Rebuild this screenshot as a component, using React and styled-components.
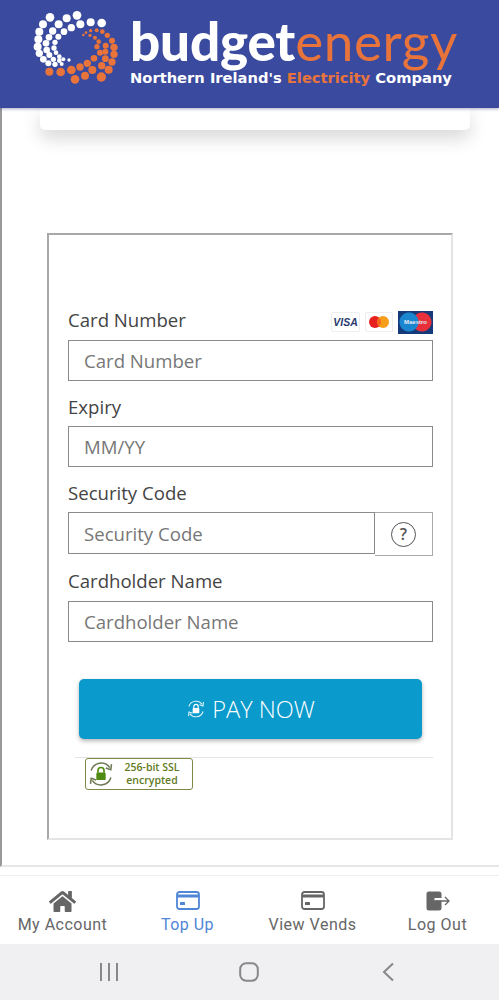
import React from 'react'
import styled, { createGlobalStyle } from 'styled-components'
import { FaHome } from 'react-icons/fa'

const whiteDots = [
    [150, 52, 13], [200, 55, 12], [231, 46, 13], [272, 67, 12], [305, 69, 13],
    [129, 73, 12], [176, 73, 12], [214, 83, 11], [241, 73, 12],
    [118, 95, 12], [158, 93, 11], [192, 95, 10],
    [115, 118, 12], [147, 112, 10], [175, 110, 9],
    [113, 140, 12], [138, 130, 10], [165, 127, 8],
    [118, 160, 11], [140, 150, 10], [162, 144, 8],
    [130, 178, 10], [148, 165, 9], [168, 158, 7],
    [145, 190, 9], [160, 178, 8], [178, 170, 7],
    [165, 193, 8], [178, 182, 7], [190, 178, 6], [207, 180, 5], [185, 192, 6],
]

const orangeDots = [
    [148, 215, 12], [182, 216, 13], [214, 210, 13], [240, 201, 11], [262, 190, 11], [282, 175, 10], [300, 158, 9],
    [225, 238, 13], [255, 227, 12], [277, 210, 12], [305, 197, 11], [316, 176, 10],
    [304, 231, 14], [326, 209, 12], [336, 186, 11], [342, 163, 11], [342, 142, 11], [336, 122, 9], [322, 106, 8], [307, 95, 7], [290, 91, 6], [272, 92, 5],
    [317, 137, 9], [316, 155, 9], [291, 140, 8], [296, 125, 7], [285, 113, 6], [270, 106, 5], [250, 105, 4], [258, 98, 4],
]

const LogoMark = () => (
    <LogoSvg viewBox="90 24 270 240">
        {whiteDots.map(([x, y, r]) => <circle key={`${x}-${y}`} cx={x} cy={y} r={r} fill="#fff" />)}
        {orangeDots.map(([x, y, r]) => <circle key={`${x}-${y}`} cx={x} cy={y} r={r} fill="#e8743b" />)}
    </LogoSvg>
)

const CardOutline = ({ color }) => (
    <svg width="24" height="20" viewBox="0 0 24 20" fill="none">
        <rect x="1" y="1" width="22" height="17" rx="2.5" stroke={color} strokeWidth="1.8" />
        <rect x="1" y="3.5" width="22" height="3" fill={color} />
        <rect x="4" y="11" width="5" height="3" rx="0.5" fill={color} />
    </svg>
)

const LogoutIcon = () => (
    <svg width="24" height="20" viewBox="0 0 24 20" fill="none">
        <path d="M3 0.5h10a2.5 2.5 0 0 1 2.5 2.5v4H8.5v2.5h7V17a2.5 2.5 0 0 1-2.5 2.5H3A2.5 2.5 0 0 1 .5 17V3A2.5 2.5 0 0 1 3 .5z" fill="#666" />
        <path d="M9 10h14M19 6l4 4-4 4" stroke="#666" strokeWidth="1.3" />
    </svg>
)

const LockCycle = ({ color, size, lock }) => (
    <svg width={size} height={size} viewBox="0 0 24 24" fill="none">
        <path d="M3.5 9A9 9 0 0 1 19.5 6.5M20.5 15A9 9 0 0 1 4.5 17.5" stroke={color} strokeWidth="1.3" />
        <path d="M21 3.5l-.6 4.8-4.3-1.4M3 20.5l.6-4.8 4.3 1.4" stroke={color} strokeWidth="1.3" />
        <path d="M9.4 11V9a2.6 2.6 0 0 1 5.2 0v2" stroke={lock || color} strokeWidth="1.4" />
        <rect x="8" y="10.8" width="8" height="6.4" rx="1" fill={lock || color} />
    </svg>
)

const Field = ({ label, children }) => (
    <FieldWrap>
        <Label>{label}</Label>
        {children}
    </FieldWrap>
)

export default function App() {
    return (
        <Screen>
            <GlobalStyle />
            <Header>
                <LogoMark />
                <LogoText>
                    <Wordmark>budget<Energy>energy</Energy></Wordmark>
                    <Tagline>Northern Ireland's <Orange>Electricity</Orange> Company</Tagline>
                </LogoText>
            </Header>
            <Main>
                <TopCard />
                <Frame>
                    <LabelRow>
                        <Label>Card Number</Label>
                        <CardLogos>
                            <VisaBadge>VISA</VisaBadge>
                            <McBadge>
                                <svg width="24" height="14" viewBox="0 0 24 14">
                                    <circle cx="8" cy="7" r="6" fill="#e8201f" />
                                    <circle cx="16" cy="7" r="6" fill="#f79e1b" />
                                    <path d="M12 2.6a6 6 0 0 1 0 8.8a6 6 0 0 1 0-8.8z" fill="#f4661e" />
                                </svg>
                            </McBadge>
                            <MaestroBadge>
                                <MaestroText>Maestro</MaestroText>
                            </MaestroBadge>
                        </CardLogos>
                    </LabelRow>
                    <Input placeholder="Card Number" />
                    <Field label="Expiry">
                        <Input placeholder="MM/YY" />
                    </Field>
                    <Field label="Security Code">
                        <SecurityRow>
                            <Input placeholder="Security Code" />
                            <HelpBox><HelpCircle>?</HelpCircle></HelpBox>
                        </SecurityRow>
                    </Field>
                    <NameField>
                        <Label>Cardholder Name</Label>
                        <Input placeholder="Cardholder Name" />
                    </NameField>
                    <PayButton>
                        <LockCycle color="#d8f0f8" lock="#fff" size={20} />
                        PAY NOW
                    </PayButton>
                    <Divider />
                    <SslBadge>
                        <LockCycle color="#6d7a55" lock="#4f8a12" size={28} />
                        <SslText>256-bit SSL<br />encrypted</SslText>
                    </SslBadge>
                </Frame>
            </Main>
            <BottomNav>
                <NavItem>
                    <NavIcon><FaHome size={27} color="#666" /></NavIcon>
                    My Account
                </NavItem>
                <NavItem $active>
                    <NavIcon><CardOutline color="#4f86d6" /></NavIcon>
                    Top Up
                </NavItem>
                <NavItem>
                    <NavIcon><CardOutline color="#666" /></NavIcon>
                    View Vends
                </NavItem>
                <NavItem>
                    <NavIcon><LogoutIcon /></NavIcon>
                    Log Out
                </NavItem>
            </BottomNav>
            <SystemBar>
                <svg width="20" height="18" viewBox="0 0 20 18">
                    <path d="M2 0v18M10 0v18M18 0v18" stroke="#888" strokeWidth="2" />
                </svg>
                <svg width="20" height="20" viewBox="0 0 20 20" fill="none">
                    <rect x="1.2" y="1.2" width="17.6" height="17.6" rx="6" stroke="#888" strokeWidth="2" />
                </svg>
                <svg width="20" height="20" viewBox="0 0 20 20" fill="none">
                    <path d="M14 1.5L5 10l9 8.5" stroke="#888" strokeWidth="2" />
                </svg>
            </SystemBar>
        </Screen>
    )
}

const GlobalStyle = createGlobalStyle`
    html, body {
        margin: 0;
        padding: 0;
        background: #fff;
    }
    * {
        box-sizing: border-box;
    }
`
const Screen = styled.div`
    width: 499px;
    height: 1000px;
    display: flex;
    flex-direction: column;
    overflow: hidden;
    background: #fff;
`
const Header = styled.header`
    height: 108px;
    flex: none;
    display: flex;
    align-items: flex-start;
    padding: 8px 0 0 30px;
    background: #3a4a9e;
    box-shadow: 0 1px 3px rgba(40, 50, 120, 0.4);
    position: relative;
    z-index: 2;
`
const LogoSvg = styled.svg`
    width: 90px;
    height: 80px;
    flex: none;
`
const LogoText = styled.div`
    margin-left: 10px;
    padding-top: 4px;
    display: flex;
    flex-direction: column;
`
const Wordmark = styled.div`
    font-family: "Lato", sans-serif;
    font-size: 53px;
    line-height: 58px;
    font-weight: 900;
    color: #fff;
    letter-spacing: -0.2px;
    white-space: nowrap;
`
const Energy = styled.span`
    font-weight: 400;
    color: #e8743b;
    letter-spacing: 0.6px;
`
const Tagline = styled.div`
    font-family: "DejaVu Sans", sans-serif;
    font-size: 14.7px;
    line-height: 16px;
    font-weight: 700;
    color: #fff;
    white-space: nowrap;
`
const Orange = styled.span`
    color: #e8743b;
`
const Main = styled.main`
    flex: none;
    height: 759px;
    border-left: 2px solid #999;
    border-bottom: 2px solid #e6e6e6;
    overflow: hidden;
`
const TopCard = styled.div`
    width: 430px;
    height: 22px;
    margin-left: 38px;
    background: #fff;
    border-radius: 0 0 5px 5px;
    box-shadow: 0 8px 18px rgba(0, 0, 0, 0.16);
`
const Frame = styled.div`
    width: 406px;
    height: 607px;
    margin: 103px 0 0 45px;
    padding: 75px 18px 0 19px;
    border: 2px solid #a8a8a8;
    border-right-color: #e4e4e4;
    border-bottom-color: #e4e4e4;
    font-family: "Open Sans", sans-serif;
`
const Label = styled.label`
    display: block;
    font-size: 18.6px;
    line-height: 24px;
    color: #444;
`
const LabelRow = styled.div`
    display: flex;
    justify-content: space-between;
    align-items: flex-start;
    height: 30px;
    ${Label} {
        line-height: 20px;
    }
`
const CardLogos = styled.div`
    display: flex;
    gap: 5px;
    align-items: center;
    height: 24px;
`
const VisaBadge = styled.div`
    width: 29px;
    height: 20px;
    border: 1px solid #eee;
    border-radius: 2px;
    font: italic 700 10.5px "Liberation Sans", sans-serif;
    color: #2a3a6e;
    display: flex;
    align-items: center;
    justify-content: center;
`
const McBadge = styled(VisaBadge)`
    width: 28px;
`
const MaestroBadge = styled.div`
    width: 35px;
    height: 23px;
    background: radial-gradient(circle at 11px 11px, #1a86d0 9px, transparent 10px),
        radial-gradient(circle at 24px 11px, #e8303a 9px, transparent 10px), #143a7a;
    display: flex;
    align-items: center;
    justify-content: center;
`
const MaestroText = styled.span`
    font: 700 6px "Liberation Sans", sans-serif;
    color: #e6ecf8;
`
const Input = styled.input`
    display: block;
    width: 100%;
    height: 41px;
    flex: 1;
    min-width: 0;
    padding: 0 15px;
    border: 1px solid #8a8a8a;
    border-radius: 0;
    background: #fff;
    outline: none;
    font-family: "Open Sans", sans-serif;
    font-size: 18.6px;
    &::placeholder {
        color: #777;
        opacity: 1;
    }
`
const FieldWrap = styled.div`
    margin-top: 14px;
    ${Label} {
        margin-bottom: 7px;
    }
`
const NameField = styled(FieldWrap)`
    margin-top: 13px;
    ${Label} {
        margin-bottom: 8px;
    }
`
const SecurityRow = styled.div`
    display: flex;
    align-items: flex-start;
    ${Input} {
        height: 42px;
    }
`
const HelpBox = styled.div`
    width: 58px;
    height: 44px;
    flex: none;
    border: 1px solid #aaa;
    border-left: none;
    display: flex;
    align-items: center;
    justify-content: center;
`
const HelpCircle = styled.div`
    width: 25px;
    height: 25px;
    border: 1.5px solid #555;
    border-radius: 50%;
    display: flex;
    align-items: center;
    justify-content: center;
    font-size: 16px;
    font-weight: 600;
    color: #555;
`
const PayButton = styled.button`
    width: 343px;
    height: 60px;
    margin: 37px 0 0 11px;
    display: flex;
    align-items: center;
    justify-content: center;
    gap: 6px;
    border: none;
    border-radius: 5px;
    background: #0a9acb;
    box-shadow: 0 2px 4px rgba(0, 0, 0, 0.3);
    font-family: "Open Sans", sans-serif;
    font-size: 23.6px;
    font-weight: 300;
    color: #fff;
`
const Divider = styled.div`
    height: 1px;
    margin: 18px 0 0 7px;
    background: #e4e4e4;
`
const SslBadge = styled.div`
    width: 108px;
    height: 32px;
    margin-left: 17px;
    padding: 0 3px 0 1px;
    display: flex;
    align-items: center;
    border: 1px solid #7d8a45;
    border-radius: 3px;
`
const SslText = styled.div`
    flex: 1;
    text-align: center;
    font-size: 10.5px;
    line-height: 13px;
    font-weight: 600;
    color: #5f7a22;
`
const BottomNav = styled.nav`
    flex: none;
    height: 69px;
    margin-top: 8px;
    display: flex;
    justify-content: space-between;
    padding: 0 0 0 0;
    border-top: 1px solid #eee;
    background: #fff;
`
const NavItem = styled.div`
    width: 125px;
    display: flex;
    flex-direction: column;
    align-items: center;
    padding-top: 11px;
    font-family: "Roboto", sans-serif;
    font-size: 16px;
    line-height: 20px;
    letter-spacing: 0.5px;
    color: ${(props) => (props.$active ? '#4f86d6' : '#666')};
    &:last-child {
        margin-right: -1px;
    }
`
const NavIcon = styled.div`
    height: 28px;
    display: flex;
    align-items: center;
    justify-content: center;
`
const SystemBar = styled.div`
    flex: none;
    height: 56px;
    padding-right: 2px;
    display: grid;
    grid-template-columns: repeat(3, 140px);
    justify-content: center;
    justify-items: center;
    align-items: center;
    background: #f0f0f2;
`
